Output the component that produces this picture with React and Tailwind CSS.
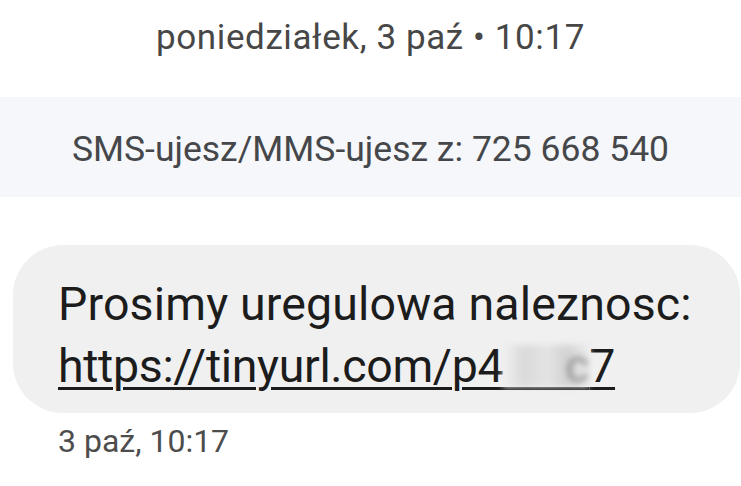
export default function App() {
  const font = { fontFamily: 'Roboto, "Noto Sans", sans-serif' };
  return (
    <div className="w-[741px] h-[486px] overflow-hidden bg-white" style={font}>
      <div className="h-[97px] pt-[18px] text-center text-[35px] leading-[40px] tracking-[0.6px] text-[#474747]">
        poniedziałek, 3 paź • 10:17
      </div>
      <div className="h-[100px] bg-[#f6f7fa] pt-[32px] text-center text-[35.5px] leading-[40px] text-[#45474b]">
        SMS-ujesz/MMS-ujesz z: 725 668 540
      </div>
      <div className="mt-[48px] ml-[13px] mr-[1px] h-[168px] rounded-[50px] bg-[#f0f0f0] pl-[45px] pt-[28px] text-[46.5px] leading-[62px] text-[#1c1c1c]">
        <div className="tracking-[0.15px]">Prosimy uregulowa naleznosc:</div>
        <div className="tracking-[-0.35px]">
          <span className="underline decoration-[3px] underline-offset-[5px]">
            https://tinyurl.com/p4
            <span className="inline-block w-[86px] leading-[42px] border-b-[3px] border-[#1c1c1c] align-baseline">
              <span className="block pl-[4px] text-right text-[#8c8c8c] blur-[3px] bg-[linear-gradient(90deg,#f0f0f0,#d9d9d9_25%,#e4e4e4_50%,#d2d2d2_75%,#ececec)]">c</span>
            </span>
            7
          </span>
        </div>
      </div>
      <div className="mt-[8px] pl-[58px] text-[32px] leading-[40px] text-[#4d4d4d]">3 paź, 10:17</div>
    </div>
  );
}
